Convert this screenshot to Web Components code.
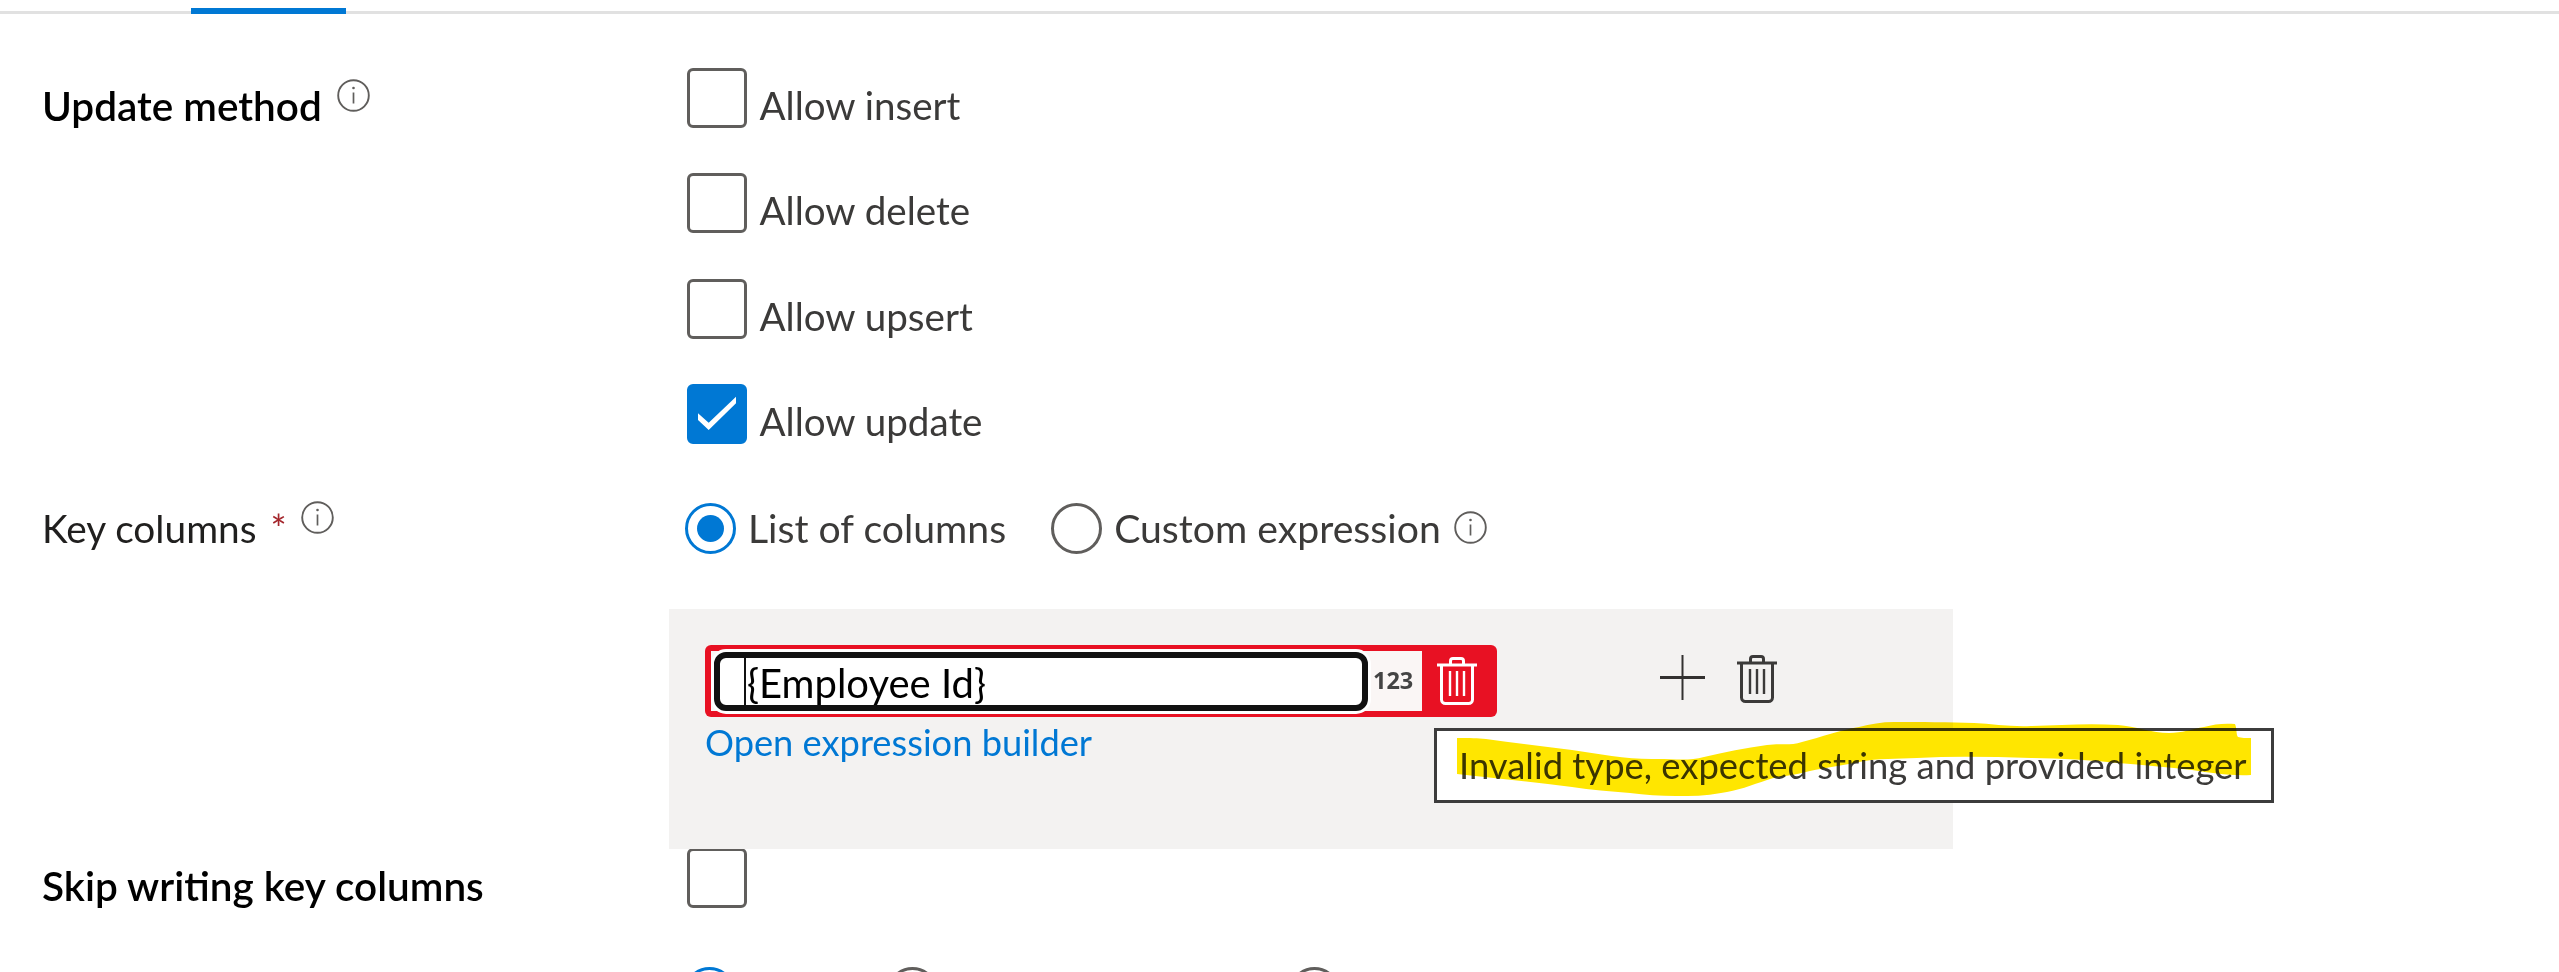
<!doctype html>
<html>
<head>
<meta charset="utf-8">
<style>
  html, body { margin: 0; background: #fff; }
  body { font-family: Lato, "Liberation Sans", sans-serif; color: #323130; }
</style>
</head>
<body>
<ds-page>
  <ds-tabs></ds-tabs>

  <ds-row class="update">
    <ds-label slot="label" strong info>Update method</ds-label>
    <ds-stack>
      <ds-check>Allow insert</ds-check>
      <ds-check>Allow delete</ds-check>
      <ds-check>Allow upsert</ds-check>
      <ds-check checked>Allow update</ds-check>
    </ds-stack>
  </ds-row>

  <ds-row class="keys">
    <ds-label slot="label" required info>Key columns</ds-label>
    <ds-radio-group>
      <ds-radio checked>List of columns</ds-radio>
      <ds-radio info>Custom expression</ds-radio>
    </ds-radio-group>
    <ds-key-panel>
      <ds-key-input>{Employee Id}</ds-key-input>
      <ds-tooltip slot="tip">Invalid type, expected string and provided integer</ds-tooltip>
    </ds-key-panel>
  </ds-row>

  <ds-row class="skip">
    <ds-label slot="label" strong>Skip writing key columns</ds-label>
    <ds-check></ds-check>
  </ds-row>

  <ds-cut-radios></ds-cut-radios>
  <ds-highlight></ds-highlight>
</ds-page>

<script>
function define(name, html) {
  const template = document.createElement('template');
  template.innerHTML = html;
  customElements.define(name, class extends HTMLElement {
    connectedCallback() {
      if (this.shadowRoot) return;
      this.attachShadow({ mode: 'open' });
      this.shadowRoot.appendChild(template.content.cloneNode(true));
    }
  });
}

define('ds-page', `
<style>
  :host { display: block; position: relative; width: 2559px; height: 972px; overflow: hidden; background: #fff; }
  ::slotted(.update) { margin-top: 54px; }
  ::slotted(.keys) { margin-top: 59px; }
  ::slotted(.skip) { margin-top: -1px; }
</style>
<slot></slot>`);

define('ds-tabs', `
<style>
  :host { display: flow-root; height: 11px; border-bottom: 3px solid #e1e1e1; }
  .ink { width: 155px; height: 6px; margin: 8px 0 -3px 191px; background: #0078d4; }
</style>
<div class="ink"></div>`);

define('ds-info', `
<style>
  :host { display: block; width: 33px; height: 33px; color: #605e5c; flex: none; }
  svg { display: block; }
</style>
<svg width="33" height="33" viewBox="0 0 33 33" fill="none" stroke="currentColor">
  <circle cx="16.5" cy="16.5" r="15.3" stroke-width="1.9"/>
  <path d="M16.5 13.5V24.5" stroke-width="1.7"/>
  <circle cx="16.5" cy="9" r="1.3" fill="currentColor" stroke="none"/>
</svg>`);

define('ds-row', `
<style>
  :host { display: grid; grid-template-columns: 687px 1fr; height: auto; }
  .left { padding-left: 42px; height: 0; }
</style>
<div class="left"><slot name="label"></slot></div>
<div><slot></slot></div>`);

define('ds-label', `
<style>
  :host { display: flex; align-items: flex-start; font-size: 38.800px; line-height: 48px; white-space: nowrap; color: #201f1e; }
  :host([strong]) { font-size: 40.500px; font-weight: 600; color: #000; padding-top: 14px; }
  :host([required]) { padding-top: 1.500px; }
  .req { display: none; color: #a4262c; font-size: 38px; margin-left: 14px; }
  :host([required]) .req { display: block; }
  ds-info { display: none; margin: -3px 0 0 15px; }
  :host([info]) ds-info { display: block; }
  :host([required]) ds-info { margin: -3px 0 0 14.500px; }
</style>
<slot></slot><span class="req">*</span><ds-info></ds-info>`);

define('ds-stack', `
<style>
  :host { display: flex; flex-direction: column; gap: 45.330px; }
</style>
<slot></slot>`);

define('ds-check', `
<style>
  :host { display: flex; gap: 12.500px; font-size: 38.600px; line-height: 45px; color: #3b3a39; white-space: nowrap; }
  .box { box-sizing: border-box; width: 60px; height: 60px; border: 3px solid #605e5c; border-radius: 6px; background: #fff; flex: none; }
  svg { display: none; margin: -3px; }
  :host([checked]) .box { background: #0078d4; border-color: #0078d4; }
  :host([checked]) svg { display: block; }
  .text { padding-top: 15px; }
</style>
<div class="box">
  <svg width="60" height="60" viewBox="0 0 60 60"><path fill="#fff" d="M11 29.300L21.700 38.700L49 12.700V19.300L21.700 46L11 36Z"/></svg>
</div>
<div class="text"><slot></slot></div>`);

define('ds-radio', `
<style>
  :host { display: flex; align-items: center; gap: 12px; font-size: 39.200px; line-height: 46px; color: #3b3a39; white-space: nowrap; }
  .dot { box-sizing: border-box; width: 51px; height: 51px; border: 3px solid #605e5c; border-radius: 50%; background: #fff; display: flex; align-items: center; justify-content: center; flex: none; }
  :host([checked]) .dot { border-color: #0078d4; }
  :host([checked]) .dot::after { content: ""; width: 27px; height: 27px; border-radius: 50%; background: #0078d4; }
  ds-info { display: none; margin: -2px 0 0 1px; }
  :host([info]) ds-info { display: block; }
</style>
<div class="dot"></div><slot></slot><ds-info></ds-info>`);

define('ds-radio-group', `
<style>
  :host { display: flex; align-items: center; gap: 45px; margin-left: -2px; }
</style>
<slot></slot>`);

define('ds-trash', `
<style>
  :host { display: block; width: 40px; height: 48px; flex: none; color: #fff; }
  svg { display: block; }
</style>
<svg width="40" height="48" viewBox="0 0 40 48" fill="none" stroke="currentColor" stroke-width="3">
  <path d="M13.5 8V4A2.5 2.5 0 0 1 16 1.5H24A2.5 2.5 0 0 1 26.5 4V8"/>
  <path d="M0 8H40"/>
  <path d="M4.5 8V42.5A4 4 0 0 0 8.500 46.500H31.500A4 4 0 0 0 35.500 42.500V8"/>
  <path d="M13 14V39M20 14V39M27 14V39" stroke-width="2.4"/>
</svg>`);

define('ds-key-panel', `
<style>
  :host { display: block; position: relative; box-sizing: border-box; width: 1284px; height: 240px; margin: 55px 0 0 -18px; padding: 36px; background: #f3f2f1; }
  .line { display: flex; align-items: flex-start; }
  .add { display: block; margin: 10px 0 0 163px; flex: none; }
  ds-trash { margin: 10px 0 0 32px; color: #3b3a39; width: 39px; }
  .link { font-size: 36.250px; line-height: 44px; color: #0078d4; margin-top: 3px; white-space: nowrap; }
  ::slotted([slot=tip]) { position: absolute; left: 765px; top: 119px; }
</style>
<div class="line">
  <slot></slot>
  <svg class="add" width="45" height="45" viewBox="0 0 45 45" fill="none" stroke="#323130">
    <path d="M22.500 0V45" stroke-width="2"/>
    <path d="M0 22.500H45" stroke-width="3"/>
  </svg>
  <ds-trash></ds-trash>
</div>
<div class="link">Open expression builder</div>
<slot name="tip"></slot>`);

define('ds-key-input', `
<style>
  :host { display: flex; box-sizing: border-box; width: 792px; height: 72px; padding: 6px; background: #e81123; border-radius: 6px; }
  .field { display: flex; align-items: center; width: 711px; height: 60px; background: #faf6f5; flex: none; }
  .input { box-sizing: border-box; display: flex; align-items: center; width: 654px; height: 59px; margin: 1px 0 0 3px; padding-left: 24px; background: #fff; border: 6px solid #111; border-radius: 12px; box-shadow: 0 0 0 3px #fff; font-size: 40px; line-height: 48px; color: #000; white-space: nowrap; flex: none; }
  .caret { width: 2px; height: 47px; background: #111; flex: none; margin-right: 1px; }
  .value { padding-top: 3px; }
  .type { margin-left: 5px; font: 700 23.500px/1 "Open Sans", sans-serif; color: #444; }
  .del { flex: 1; display: flex; align-items: center; justify-content: center; }
</style>
<div class="field">
  <div class="input"><span class="caret"></span><span class="value"><slot></slot></span></div>
  <span class="type">123</span>
</div>
<div class="del"><ds-trash></ds-trash></div>`);

define('ds-tooltip', `
<style>
  :host { display: block; box-sizing: border-box; width: 840px; height: 75px; padding: 0 22px; border: 3px solid #3c3c3c; background: #fff; font-size: 36.400px; line-height: 69px; color: #3b3a39; white-space: nowrap; }
</style>
<slot></slot>`);

define('ds-cut-radios', `
<style>
  :host { display: flex; gap: 152px; margin: 59px 0 0 683.500px; }
  .dot { box-sizing: border-box; width: 51px; height: 51px; border: 3px solid #605e5c; border-radius: 50%; flex: none; }
  .dot.on { border-color: #0078d4; }
  .dot + .dot + .dot { margin-left: 199px; }
</style>
<div class="dot on"></div><div class="dot"></div><div class="dot"></div>`);

define('ds-highlight', `
<style>
  :host { display: block; position: absolute; inset: 0; pointer-events: none; mix-blend-mode: multiply; }
  svg { display: block; }
</style>
<svg width="2559" height="972" viewBox="0 0 2559 972">
  <path fill="#ffe600" d="M1457 738C1470 738 1478 738 1486 739C1515 743 1543 746 1572 750C1600 754 1630 760 1658 759C1675 759 1690 761 1704 757C1725 752 1745 748 1767 745C1780 743 1790 746 1802 742C1822 737 1840 730 1859 727C1870 724 1882 722 1894 722C1920 722 1950 722 1974 723C1993 724 2012 727 2031 726C2060 725 2090 723 2118 725C2135 726 2152 733 2169 733C2182 733 2192 729 2204 727C2214 724 2225 723 2235 724C2237 728 2236 735 2238 737C2241 738 2246 738 2251 738L2251 775C2230 776 2212 773 2192 770C2168 767 2143 765 2118 763C2090 760 2060 758 2031 758C1993 757 1955 756 1917 758C1897 759 1878 758 1859 762C1840 766 1820 768 1802 773C1790 776 1778 776 1767 780C1752 785 1737 791 1721 793C1706 796 1691 796 1676 796C1660 796 1645 795 1630 793C1610 791 1591 790 1572 787C1533 782 1495 778 1457 774Z"/>
</svg>`);
</script>
</body>
</html>
